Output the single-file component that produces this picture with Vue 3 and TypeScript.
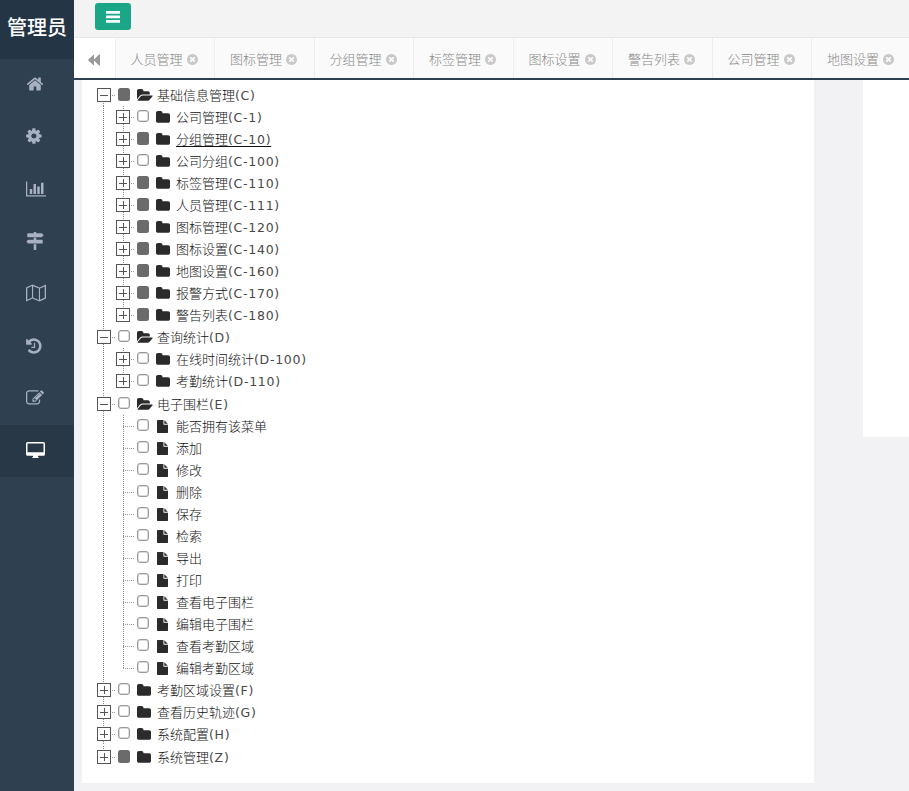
<script setup lang="ts">
interface Glyph { box: string; w: number; h: number; d: string }
interface TreeRow {
  level: 0 | 1
  kind: 'open' | 'folder' | 'file'
  name: string
  code?: string
  checked?: boolean
  hovered?: boolean
  last?: boolean
  first?: boolean
  tall?: boolean
}

const nav: (Glyph & { id: string; active?: boolean })[] = [
  { id: 'home', box: '0 0 1792 1792', w: 18, h: 18, d: 'M1472 992v480q0 26-19 45t-45 19h-384v-384h-256v384h-384q-26 0-45-19t-19-45v-480q0-1 .5-3t.5-3l575-474 575 474q1 2 1 6zm223-69l-62 74q-8 9-21 11h-3q-13 0-21-7l-692-577-692 577q-12 8-24 7-13-2-21-11l-62-74q-8-10-7-23.5t11-21.5l719-599q32-26 76-26t76 26l244 204v-195q0-14 9-23t23-9h192q14 0 23 9t9 23v408l219 182q10 8 11 21.5t-7 23.5z' },
  { id: 'settings', box: '128 0 1664 1792', w: 17, h: 18, d: 'M1152 896q0-106-75-181t-181-75-181 75-75 181 75 181 181 75 181-75 75-181zm512-109v222q0 12-8 23t-20 13l-185 28q-19 54-39 91 35 50 107 138 10 12 10 25t-9 23q-27 37-99 108t-94 71q-12 0-26-9l-138-108q-44 23-91 38-16 136-29 186-7 28-36 28h-222q-14 0-24.5-8.5t-11.5-21.5l-28-184q-49-16-90-37l-141 107q-10 9-25 9-14 0-25-11-126-114-165-168-7-10-7-23 0-12 8-23 15-21 51-66.5t54-70.5q-27-50-41-99l-183-27q-13-2-21-12.5t-8-23.5v-222q0-12 8-23t19-13l186-28q14-46 39-92-40-57-107-138-10-12-10-24 0-10 9-23 26-36 98.5-107.5t94.5-71.5q13 0 26 10l138 107q44-23 91-38 16-136 29-186 7-28 36-28h222q14 0 24.5 8.5t11.5 21.5l28 184q49 16 90 37l142-107q9-9 24-9 13 0 25 10 129 119 165 170 7 8 7 22 0 12-8 23-15 21-51 66.5t-54 70.5q26 50 41 98l183 28q13 2 21 12.5t8 23.5z' },
  { id: 'chart', box: '0 0 2048 1792', w: 20, h: 18, d: 'M640 896v512h-256v-512h256zm384-512v1024h-256v-1024h256zm1024 1152v128h-2048v-1536h128v1408h1920zm-640-896v768h-256v-768h256zm384-384v1152h-256v-1152h256z' },
  { id: 'signs', box: '0 0 1792 1792', w: 18, h: 18, d: 'M1745 297q10 10 10 23t-10 23l-141 141q-28 28-68 28h-1344q-26 0-45-19t-19-45v-256q0-26 19-45t45-19h576v-64q0-26 19-45t45-19h128q26 0 45 19t19 45v64h512q40 0 68 28zm-977 919h256v512q0 26-19 45t-45 19h-128q-26 0-45-19t-19-45v-512zm832-448q26 0 45 19t19 45v256q0 26-19 45t-45 19h-1344q-40 0-68-28l-141-141q-10-10-10-23t10-23l141-141q28-28 68-28h512v-192h256v192h576z' },
  { id: 'map', box: '0 0 20 18', w: 20, h: 18, d: 'M0 3.4 6.5.5 13.5 3.4 20 .5V14.6L13.5 17.5 6.5 14.6 0 17.5ZM1.3 4.3V15.7L6 13.500V2.100ZM7.100 2.200V13.500L12.900 15.900V4.500ZM14 4.500V15.800L18.700 13.700V2.400Z' },
  { id: 'history', box: '128 0 1664 1792', w: 17, h: 18, d: 'M1664 896q0 156-61 298t-164 245-245 164-298 61q-172 0-327-72.5t-264-204.5q-7-10-6.5-22.5t8.5-20.5l137-138q10-9 25-9 16 2 23 12 73 95 179 147t225 52q104 0 198.5-40.5t163.5-109.5 109.5-163.5 40.5-198.5-40.5-198.5-109.5-163.5-163.5-109.5-198.5-40.5q-98 0-188 35.5t-160 101.5l137 138q31 30 14 69-17 40-59 40h-448q-26 0-45-19t-19-45v-448q0-42 40-59 39-17 69 14l130 129q107-101 244.5-156.5t284.5-55.5q156 0 298 61t245 164 164 245 61 298zm-640-288v448q0 14-9 23t-23 9h-320q-14 0-23-9t-9-23v-64q0-14 9-23t23-9h224v-352q0-14 9-23t23-9h64q14 0 23 9t9 23z' },
  { id: 'edit', box: '0 0 1792 1792', w: 18, h: 18, d: 'M888 1184l116-116-152-152-116 116v56h96v96h56zm440-720q-16-16-33 1l-350 350q-17 17-1 33t33-1l350-350q17-17 1-33zm80 594v190q0 119-84.5 203.5t-203.5 84.5h-832q-119 0-203.5-84.5t-84.5-203.5v-832q0-119 84.5-203.5t203.5-84.5h832q63 0 117 25 15 7 18 23 3 17-9 29l-49 49q-14 14-32 8-23-6-45-6h-832q-66 0-113 47t-47 113v832q0 66 47 113t113 47h832q66 0 113-47t47-113v-126q0-13 9-22l64-64q15-15 35-7t20 29zm-96-738l288 288-672 672h-288v-288zm444 132l-92 92-288-288 92-92q28-28 68-28t68 28l152 152q28 28 28 68t-28 68z' },
  { id: 'desktop', active: true, box: '0 0 19 18', w: 19, h: 18, d: 'M1.6 1H17.4Q19 1 19 2.6V13.2Q19 14.8 17.4 14.8H12V16Q13 16.3 13 17H6Q6 16.3 7 16V14.8H1.6Q0 14.8 0 13.2V2.6Q0 1 1.6 1ZM1.5 2.5V11.3H17.5V2.5Z' },
]

const glyphs: Record<TreeRow['kind'], Glyph> = {
  open: { box: '0 0 1920 1792', w: 16, h: 15, d: 'M1879 952q0 31-31 66l-336 396q-43 51-120.5 86.5t-143.5 35.5h-1088q-34 0-60.5-13t-26.5-43q0-31 31-66l336-396q43-51 120.5-86.5t143.5-35.5h1088q34 0 60.5 13t26.5 43zm-343-344v160h-832q-94 0-197 47.5t-164 119.5l-337 396-5 6q0-4-.5-12.5t-.5-12.5v-960q0-92 66-158t158-66h320q92 0 158 66t66 158v32h544q92 0 158 66t66 158z' },
  folder: { box: '64 0 1664 1792', w: 14, h: 15, d: 'M1728 608v704q0 92-66 158t-158 66h-1216q-92 0-158-66t-66-158v-960q0-92 66-158t158-66h320q92 0 158 66t66 158v32h672q92 0 158 66t66 158z' },
  file: { box: '128 0 1536 1792', w: 11, h: 13, d: 'M1152 512v-472q22 14 36 28l408 408q14 14 28 36h-472zm-128 32q0 40 28 68t68 28h544v1056q0 40-28 68t-68 28h-1344q-40 0-68-28t-28-68v-1600q0-40 28-68t68-28h800v544z' },
}

const closeGlyph = 'M1277 1122q0-26-19-45l-181-181 181-181q19-19 19-45 0-27-19-46l-90-90q-19-19-46-19-26 0-45 19l-181 181-181-181q-19-19-45-19-27 0-46 19l-90 90q-19 19-19 46 0 26 19 45l181 181-181 181q-19 19-19 45 0 27 19 46l90 90q19 19 46 19 26 0 45-19l181-181 181 181q19 19 45 19 27 0 46-19l90-90q19-19 19-46zm387-226q0 209-103 385.5t-279.5 279.5-385.5 103-385.5-103-279.5-279.5-103-385.5 103-385.5 279.5-279.5 385.5-103 385.5 103 279.5 279.5 103 385.5z'

const tabs = ['人员管理', '图标管理', '分组管理', '标签管理', '图标设置', '警告列表', '公司管理', '地图设置']

const leaves = ['能否拥有该菜单', '添加', '修改', '删除', '保存', '检索', '导出', '打印', '查看电子围栏', '编辑电子围栏', '查看考勤区域', '编辑考勤区域']

const rows: TreeRow[] = [
  { level: 0, kind: 'open', name: '基础信息管理', code: '(C)', checked: true, first: true },
  { level: 1, kind: 'folder', name: '公司管理', code: '(C-1)' },
  { level: 1, kind: 'folder', name: '分组管理', code: '(C-10)', checked: true, hovered: true },
  { level: 1, kind: 'folder', name: '公司分组', code: '(C-100)' },
  { level: 1, kind: 'folder', name: '标签管理', code: '(C-110)', checked: true },
  { level: 1, kind: 'folder', name: '人员管理', code: '(C-111)', checked: true },
  { level: 1, kind: 'folder', name: '图标管理', code: '(C-120)', checked: true },
  { level: 1, kind: 'folder', name: '图标设置', code: '(C-140)', checked: true },
  { level: 1, kind: 'folder', name: '地图设置', code: '(C-160)', checked: true },
  { level: 1, kind: 'folder', name: '报警方式', code: '(C-170)', checked: true },
  { level: 1, kind: 'folder', name: '警告列表', code: '(C-180)', checked: true, last: true },
  { level: 0, kind: 'open', name: '查询统计', code: '(D)' },
  { level: 1, kind: 'folder', name: '在线时间统计', code: '(D-100)' },
  { level: 1, kind: 'folder', name: '考勤统计', code: '(D-110)', last: true, tall: true },
  { level: 0, kind: 'open', name: '电子围栏', code: '(E)' },
  ...leaves.map((name, i): TreeRow => ({ level: 1, kind: 'file', name, last: i === leaves.length - 1 })),
  { level: 0, kind: 'folder', name: '考勤区域设置', code: '(F)' },
  { level: 0, kind: 'folder', name: '查看历史轨迹', code: '(G)' },
  { level: 0, kind: 'folder', name: '系统配置', code: '(H)', tall: true },
  { level: 0, kind: 'folder', name: '系统管理', code: '(Z)', checked: true, last: true },
]
</script>

<template>
  <div class="page">
    <aside class="sidebar">
      <div class="brand">管理员</div>
      <nav>
        <a v-for="n in nav" :key="n.id" class="nav-item" :class="{ active: n.active }">
          <svg :viewBox="n.box" :width="n.w" :height="n.h"><path :d="n.d" fill-rule="evenodd" /></svg>
        </a>
      </nav>
    </aside>
    <main class="main">
      <header class="topbar">
        <button class="menu-btn" type="button">
          <svg viewBox="0 0 14 12" width="14" height="12"><path d="M.5 0h13q.5 0 .5.5v1.700q0 .5-.5.5H.5q-.5 0-.5-.5V.5Q0 0 .5 0ZM.5 4.500h13q.5 0 .5.5v1.700q0 .5-.5.5H.5q-.5 0-.5-.5V5q0-.5.5-.5ZM.5 9h13q.5 0 .5.5v1.700q0 .5-.5.5H.5q-.5 0-.5-.5V9.500Q0 9 .5 9Z" /></svg>
        </button>
      </header>
      <div class="tabs">
        <button class="scroll-btn" type="button">
          <svg viewBox="0 0 12 12" width="12" height="12"><path d="M6 .3V5.500L11.300.3Q12-.1 12 .8V11.200Q12 12.100 11.300 11.700L6 6.500V11.700L.2 6.300Q0 6 .2 5.700Z" /></svg>
        </button>
        <div v-for="t in tabs" :key="t" class="tab">
          <span>{{ t }}</span>
          <svg viewBox="128 128 1536 1536" width="11" height="11"><path :d="closeGlyph" /></svg>
        </div>
      </div>
      <div class="content">
        <section class="tree">
          <div v-for="(r, i) in rows" :key="i" class="row" :class="{ tall: r.tall }">
            <span v-if="r.level === 1" class="cell guide"></span>
            <span class="cell branch" :class="['level-' + r.level, r.kind, { first: r.first, last: r.last }]">
              <span v-if="r.kind !== 'file'" class="toggle" :class="{ plus: r.kind === 'folder' }"></span>
            </span>
            <span class="check" :class="{ checked: r.checked }"></span>
            <span class="icon" :class="r.kind">
              <svg :viewBox="glyphs[r.kind].box" :width="glyphs[r.kind].w" :height="glyphs[r.kind].h" preserveAspectRatio="none"><path :d="glyphs[r.kind].d" /></svg>
            </span>
            <a class="label" :class="{ hovered: r.hovered }">{{ r.name }}<span v-if="r.code" class="code">{{ r.code }}</span></a>
          </div>
        </section>
        <section class="side-panel"></section>
      </div>
    </main>
  </div>
</template>

<style>
body { margin: 0; overflow: hidden; }
</style>

<style scoped>
.page { display: flex; width: 909px; height: 791px; overflow: hidden; background: #f2f2f4; font-family: "Noto Sans CJK SC", sans-serif; font-weight: 300; font-size: 13px; }
svg { display: block; fill: currentColor; flex: none; }
button { border: 0; padding: 0; }
.sidebar { flex: none; width: 74px; background: #2f4050; }
.brand { height: 59px; box-sizing: border-box; padding-top: 12px; background: #243646; color: #fff; font-size: 20px; line-height: 30px; text-align: center; font-weight: 500; white-space: nowrap; }
.nav-item { display: flex; align-items: center; height: 52.3px; padding: 0 0 2px 25.5px; box-sizing: border-box; color: #a7b1c2; }
.nav-item.active { background: #293846; color: #fff; }
.main { flex: 1; min-width: 0; display: flex; flex-direction: column; }
.topbar { height: 37px; flex: none; padding: 3px 0 0 21px; box-sizing: border-box; background: #f3f3f4; }
.menu-btn { display: flex; align-items: center; justify-content: center; width: 36px; height: 27px; background: #1ba787; color: #fff; border-radius: 3px; }
.tabs { display: flex; flex: none; height: 43px; box-sizing: border-box; background: #fafafa; border-top: 1px solid #e7e7e7; border-bottom: 2px solid #2f4050; overflow: hidden; }
.scroll-btn { display: flex; align-items: center; justify-content: center; flex: none; width: 41.5px; padding-top: 4px; box-sizing: border-box; background: #fff; color: #999; border-right: 1px solid #eee; }
.tab { display: flex; align-items: center; flex: none; gap: 4px; width: 99.5px; padding: 1px 0 0 15px; box-sizing: border-box; border-right: 1px solid #ededed; color: #888; line-height: 20px; white-space: nowrap; }
.tab svg { margin-top: 2px; color: #c9c9c9; }
.content { display: flex; align-items: flex-start; flex: 1; padding-left: 8px; }
.tree { flex: none; width: 732px; height: 703px; box-sizing: border-box; padding: 4px 0 0 12px; background: #fff; }
.side-panel { flex: none; width: 46px; height: 357px; margin-left: 49px; background: #fff; }
.row { display: flex; align-items: center; height: 22px; }
.row.tall { height: 23px; box-sizing: border-box; padding-bottom: 1px; }
.cell { flex: none; align-self: stretch; width: 20px; display: flex; align-items: center; }
.guide { width: 19px; background: linear-gradient(#777 1px, transparent 1px) 9px 0 / 1px 2px repeat-y; }
.branch { position: relative; width: 24px; }
.branch::before { content: ""; position: absolute; left: 10px; top: 0; bottom: 0; width: 1px; background: linear-gradient(#888 1px, transparent 1px) 0 0 / 1px 2px; }
.branch.level-0::before { left: 9px; }
.branch.first::before { top: 11px; }
.branch.last::before { bottom: 11px; }
.branch::after { content: ""; position: absolute; left: 10px; right: 3px; top: 11px; height: 1px; background: linear-gradient(90deg, #999 1px, transparent 1px) 0 0 / 2px 1px; }
.toggle { position: relative; z-index: 1; width: 14px; height: 14px; box-sizing: border-box; margin-left: 3px; border: 1px solid #555; background: linear-gradient(#555, #555) center / 8px 1px no-repeat #fff; }
.toggle.plus { background: linear-gradient(#555, #555) center / 8px 1px no-repeat, linear-gradient(#555, #555) center / 1px 8px no-repeat #fff; }
.check { flex: none; width: 12px; height: 12px; box-sizing: border-box; margin-bottom: 3px; border: 1.5px solid #999; border-radius: 3px; background: #fff; box-shadow: inset 0 0 0 .5px #bbb; }
.check.checked { height: 13px; border: 0; margin-bottom: 2px; border-radius: 2.5px; background: #6b6b6b; box-shadow: none; }
.icon { flex: none; width: 27px; box-sizing: border-box; padding: 1px 0 0 7px; color: #2b2b2b; }
.icon.file { padding: 1px 0 0 8px; }
.label { color: #111; line-height: 22px; white-space: nowrap; }
.code { font-family: "DejaVu Sans", Verdana, sans-serif; font-size: 12.5px; letter-spacing: .72px; font-weight: 400; color: #484848; }
.label.hovered { text-decoration: underline; text-underline-offset: 2px; }
</style>
